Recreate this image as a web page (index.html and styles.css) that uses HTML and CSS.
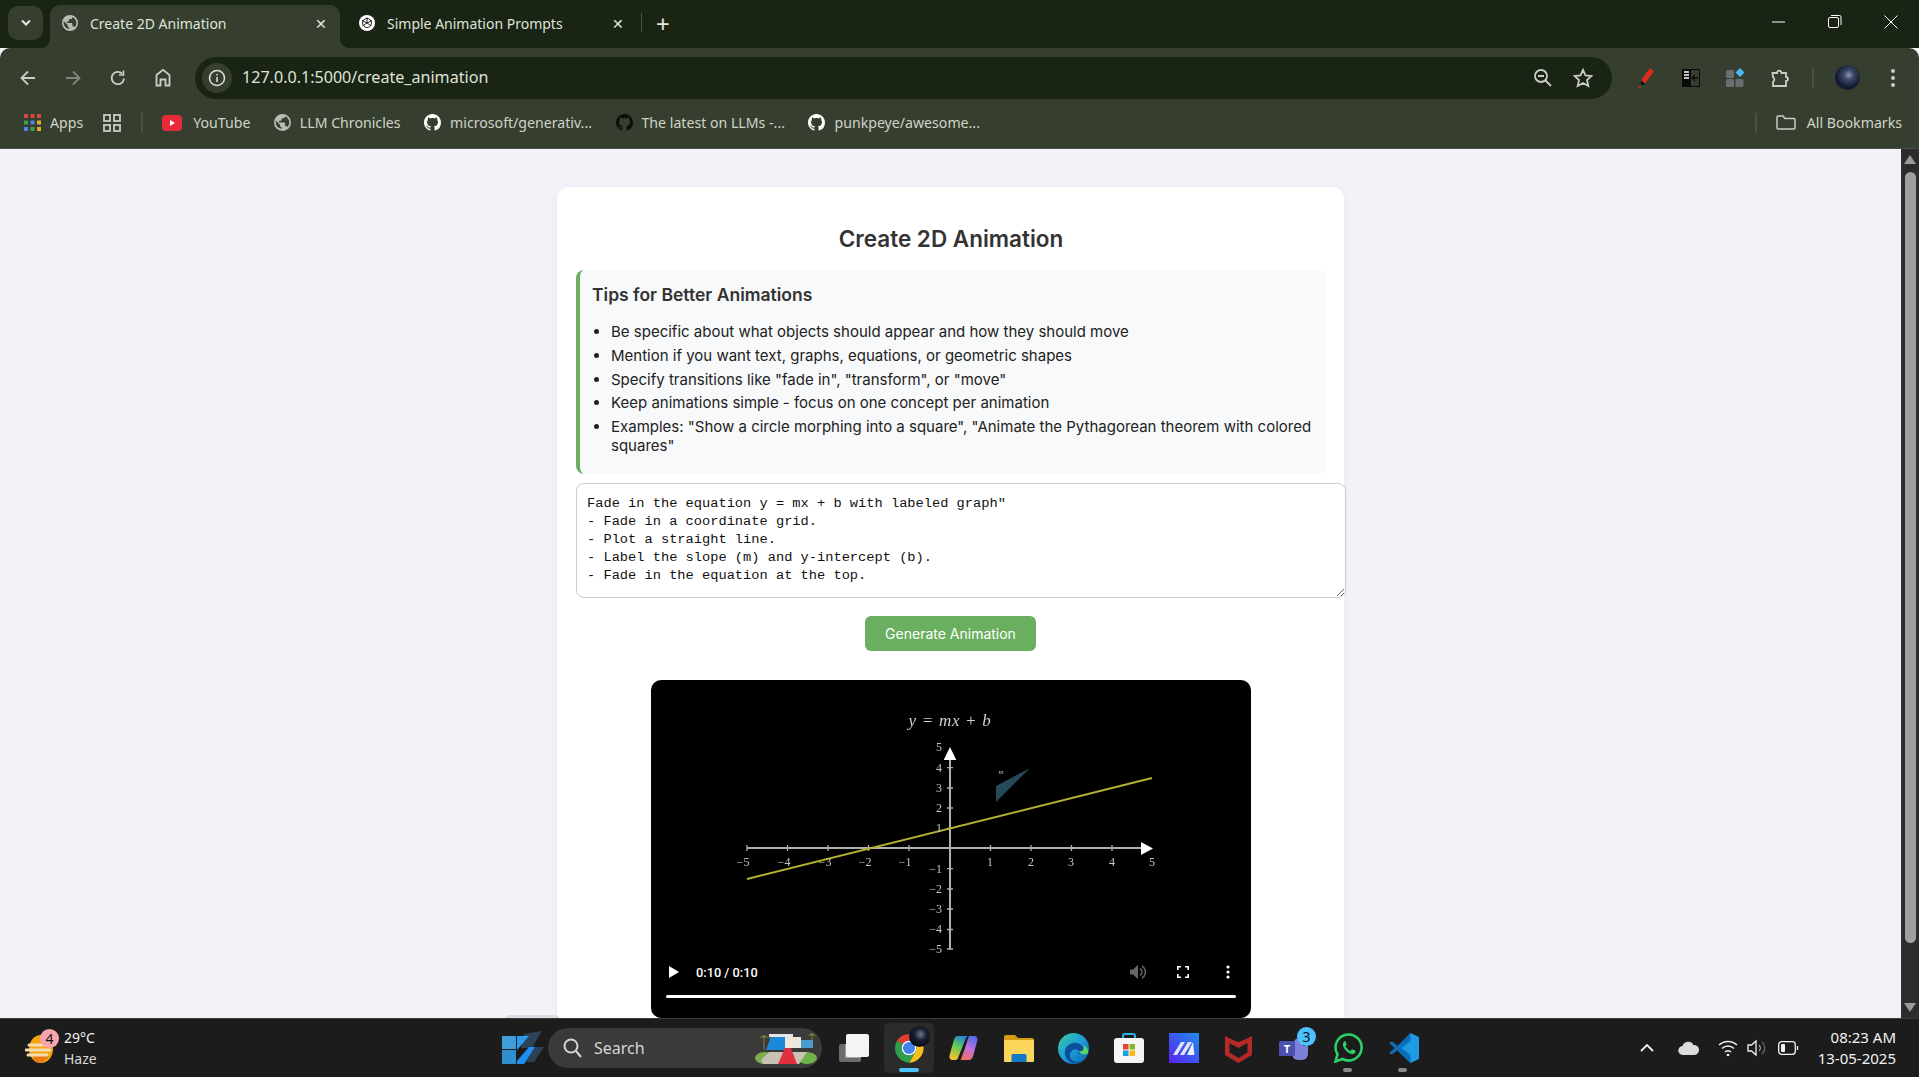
FILE: index.html
```html
<!DOCTYPE html>
<html lang="en">
<head>
    <meta charset="UTF-8">
    <meta name="viewport" content="width=device-width, initial-scale=1.0">
    <title>Create 2D Animation</title>
    <link rel="stylesheet" href="styles.css">
</head>
<body>
    <svg class="sprite" aria-hidden="true">
        <symbol id="github" viewBox="0 0 16 16">
            <path d="M8 0C3.58 0 0 3.58 0 8c0 3.54 2.29 6.53 5.47 7.59.4.07.55-.17.55-.38 0-.19-.01-.82-.01-1.49-2.01.37-2.53-.49-2.69-.94-.09-.23-.48-.94-.82-1.13-.28-.15-.68-.52-.01-.53.63-.01 1.08.58 1.23.82.72 1.21 1.87.87 2.33.66.07-.52.28-.87.51-1.07-1.78-.2-3.64-.89-3.64-3.95 0-.87.31-1.59.82-2.15-.08-.2-.36-1.02.08-2.12 0 0 .67-.21 2.2.82.64-.18 1.32-.27 2-.27.68 0 1.36.09 2 .27 1.53-1.04 2.2-.82 2.2-.82.44 1.1.16 1.92.08 2.12.51.56.82 1.27.82 2.15 0 3.07-1.87 3.75-3.65 3.95.29.25.54.73.54 1.48 0 1.07-.01 1.93-.01 2.2 0 .21.15.46.55.38A8.013 8.013 0 0016 8c0-4.42-3.58-8-8-8z"/>
        </symbol>
        <symbol id="globe" viewBox="0 0 16 16">
            <path d="M8 0a8 8 0 1 0 0 16A8 8 0 0 0 8 0zM1.600 8c0-.6.1-1.200.2-1.700L5.600 10v.8c0 .9.7 1.600 1.600 1.600v1.500A6.400 6.400 0 0 1 1.600 8zm11.100 4.300c-.2-.6-.8-1.100-1.500-1.100h-.8V8.800c0-.4-.4-.8-.8-.8H4.800V6.400h1.600c.4 0 .8-.4.8-.8V4h1.600c.9 0 1.600-.7 1.600-1.600v-.3a6.400 6.400 0 0 1 2.300 10.200z"/>
        </symbol>
    </svg>

    <div class="tabstrip">
        <button class="tab-search" aria-label="Search tabs">
            <svg width="12" height="8" viewBox="0 0 12 8"><path d="M2 1.500l4 4 4-4" fill="none" stroke="#e4e8dd" stroke-width="2"/></svg>
        </button>
        <div class="tab tab-active">
            <svg class="fav" fill="#b8bcb4"><use href="#globe"/></svg>
            <span class="tab-title">Create 2D Animation</span>
            <span class="tab-close">&#x2715;</span>
        </div>
        <div class="tab">
            <svg class="fav" viewBox="0 0 16 16">
                <circle cx="8" cy="8" r="8" fill="#fff"/>
                <g fill="none" stroke="#222" stroke-width="1">
                    <circle cx="8" cy="8" r="4.500"/>
                    <path d="M8 2.500v5.500l4.500 3M3.500 11l4.500-3M3 5.500l5 2.500 5-2.500"/>
                </g>
            </svg>
            <span class="tab-title">Simple Animation Prompts</span>
            <span class="tab-close">&#x2715;</span>
        </div>
        <span class="tab-sep"></span>
        <span class="tab-new">+</span>
        <div class="window-controls">
            <svg width="14" height="14" viewBox="0 0 14 14"><path d="M0 7h13" stroke="#fff" stroke-width="1"/></svg>
            <svg width="14" height="14" viewBox="0 0 14 14" fill="none" stroke="#fff"><rect x=".5" y="2.500" width="10" height="10" rx="1.500"/><path d="M3 .5h8.500a1.500 1.500 0 0 1 1.500 1.500v8"/></svg>
            <svg width="14" height="14" viewBox="0 0 14 14"><path d="M.5.5l13 13M13.500.5l-13 13" stroke="#fff"/></svg>
        </div>
    </div>

    <div class="toolbar">
        <span class="nav-btn"><svg width="18" height="18" viewBox="0 0 18 18" fill="none" stroke="#c9cec2" stroke-width="1.800"><path d="M16 9H3M9 2.500L2.500 9 9 15.500"/></svg></span>
        <span class="nav-btn"><svg width="18" height="18" viewBox="0 0 18 18" fill="none" stroke="#7f8679" stroke-width="1.800"><path d="M2 9h13M9 2.500L15.500 9 9 15.500"/></svg></span>
        <span class="nav-btn"><svg width="18" height="18" viewBox="0 0 18 18" fill="none" stroke="#c9cec2" stroke-width="1.800"><path d="M15 9.500A6.200 6.200 0 1 1 13.200 4.600"/><path d="M14.500 1.500v4.500H10" stroke-width="1.600"/></svg></span>
        <span class="nav-btn"><svg width="18" height="19" viewBox="0 0 18 19" fill="none" stroke="#c9cec2" stroke-width="1.800"><path d="M2.500 17.500V7L9 1.800 15.500 7v10.500h-4v-6h-5v6z"/></svg></span>
        <div class="omnibox">
            <span class="site-info"><svg width="18" height="18" viewBox="0 0 18 18" fill="none" stroke="#dfe3d8" stroke-width="1.500"><circle cx="9" cy="9" r="7.500"/><path d="M9 8v5M9 5v1.500"/></svg></span>
            <span class="url">127.0.0.1:5000/create_animation</span>
            <span class="omni-icon"><svg width="20" height="20" viewBox="0 0 20 20" fill="none" stroke="#c9cec2" stroke-width="1.800"><circle cx="8" cy="8" r="6"/><path d="M5 8h6M12.500 12.500L18 18"/></svg></span>
            <span class="omni-icon"><svg width="20" height="20" viewBox="0 0 20 20" fill="none" stroke="#c9cec2" stroke-width="1.800"><path d="M10 1.800l2.500 5.600 6 .6-4.500 4 1.300 6L10 15l-5.300 3 1.300-6-4.500-4 6-.6z"/></svg></span>
        </div>
        <div class="extensions">
            <span class="nav-btn"><svg width="18" height="22" viewBox="0 0 18 22"><path d="M13 1l4 3.500-9 12-4-3z" fill="#d92d20"/><path d="M4 13.500l4 3-1.500 1.500-3-.5z" fill="#111"/><path d="M3 18.500l-2 2.500 3-.5z" fill="#d92d20"/></svg></span>
            <span class="nav-btn"><svg width="18" height="18" viewBox="0 0 18 18"><rect width="18" height="18" fill="#0a0a0a"/><rect x="9" y="1" width="8" height="16" fill="#363f2f"/><path d="M2 3h5M2 6h5M2 9h5" stroke="#fff" stroke-width="1.300"/><path d="M16 9h-6M13 6l-3 3 3 3" stroke="#0a0a0a" stroke-width="1.300" fill="none"/></svg></span>
            <span class="nav-btn"><svg width="19" height="19" viewBox="0 0 19 19"><rect x="0" y="2" width="8" height="8" rx="1.500" fill="#6a6d72"/><rect x="0" y="11" width="8" height="8" rx="1.500" fill="#6a6d72"/><rect x="9.500" y="11" width="8" height="8" rx="1.500" fill="#6a6d72"/><path d="M14 0l4.500 4.500L14 9 9.500 4.500z" fill="#4bb8f2"/></svg></span>
            <span class="nav-btn"><svg width="20" height="20" viewBox="0 0 20 20" fill="none" stroke="#c9cec2" stroke-width="1.800"><path d="M1.500 5h4.500a2 2 0 1 1 4.500 0h4.500v4a2 2 0 1 1 0 4v5H2v-4a3 3 0 0 0 0-5z"/></svg></span>
        </div>
        <span class="bar-sep"></span>
        <span class="avatar"></span>
        <svg class="menu-dots" width="4" height="18" viewBox="0 0 4 18" fill="#c9cec2"><circle cx="2" cy="2" r="2"/><circle cx="2" cy="9" r="2"/><circle cx="2" cy="16" r="2"/></svg>
    </div>

    <div class="bookmarks">
        <span class="bm bm-apps">
            <svg width="17" height="17" viewBox="0 0 17 17">
                <g fill="#d9473c"><rect width="4" height="4"/><rect x="6.500" width="4" height="4"/><rect x="13" width="4" height="4"/></g>
                <g fill="#3aa14f"><rect y="6.500" width="4" height="4"/><rect x="6.500" y="6.500" width="4" height="4" fill="#4b86e8"/><rect x="13" y="6.500" width="4" height="4" fill="#e8a92c"/></g>
                <g fill="#e8a92c"><rect y="13" width="4" height="4" fill="#4b86e8"/><rect x="6.500" y="13" width="4" height="4" fill="#3aa14f"/><rect x="13" y="13" width="4" height="4"/></g>
            </svg>
            Apps
        </span>
        <svg class="bm-groups" width="18" height="18" viewBox="0 0 18 18" fill="none" stroke="#c9cec2" stroke-width="1.800"><rect x="1" y="1" width="6" height="6"/><rect x="11" y="1" width="6" height="6"/><rect x="1" y="11" width="6" height="6"/><rect x="11" y="11" width="6" height="6"/></svg>
        <span class="bar-sep bm-sep"></span>
        <span class="bm bm-yt">
            <svg width="20" height="16" viewBox="0 0 20 16"><rect width="20" height="16" rx="4" fill="#e8293a"/><path d="M8 5l5 3-5 3z" fill="#fff"/></svg>
            YouTube
        </span>
        <span class="bm"><svg class="bm-icon" fill="#b8bcb4"><use href="#globe"/></svg>LLM Chronicles</span>
        <span class="bm"><svg class="bm-icon" fill="#fff"><use href="#github"/></svg>microsoft/generativ...</span>
        <span class="bm"><svg class="bm-icon" fill="#0d0f0c"><use href="#github"/></svg>The latest on LLMs -...</span>
        <span class="bm"><svg class="bm-icon" fill="#fff"><use href="#github"/></svg>punkpeye/awesome...</span>
        <span class="bm-all">
            <span class="bar-sep"></span>
            <svg width="20" height="15" viewBox="0 0 20 15" fill="none" stroke="#c9cec2" stroke-width="1.500"><path d="M1 13V2a1 1 0 0 1 1-1h5l2 2.500h9a1 1 0 0 1 1 1V13a1 1 0 0 1-1 1H2a1 1 0 0 1-1-1z"/></svg>
            All Bookmarks
        </span>
    </div>

    <div class="viewport">
        <main class="page">
            <section class="card">
                <h1>Create 2D Animation</h1>
                <div class="tips">
                    <h3>Tips for Better Animations</h3>
                    <ul>
                        <li>Be specific about what objects should appear and how they should move</li>
                        <li>Mention if you want text, graphs, equations, or geometric shapes</li>
                        <li>Specify transitions like "fade in", "transform", or "move"</li>
                        <li>Keep animations simple - focus on one concept per animation</li>
                        <li>Examples: "Show a circle morphing into a square", "Animate the Pythagorean theorem with colored squares"</li>
                    </ul>
                </div>
                <form class="prompt-form">
                    <textarea class="prompt">Fade in the equation y = mx + b with labeled graph"
- Fade in a coordinate grid.
- Plot a straight line.
- Label the slope (m) and y-intercept (b).
- Fade in the equation at the top.</textarea>
                    <button type="button" class="generate">Generate Animation</button>
                </form>
                <div class="video">
                    <svg class="plot" width="600" height="338" viewBox="0 0 600 338">
                        <g fill="none" stroke="#b0b0b0">
                            <path stroke-width="2" d="M96 168H490M299 269V80"/>
                            <path stroke-width="1.300" d="M96 165v6M136.500 165v6M177 165v6M217.500 165v6M258 165v6M339.500 165v6M380 165v6M420.500 165v6M461 165v6"/>
                            <path stroke-width="1.300" d="M296 87.700h6M296 108h6M296 128h6M296 148.300h6M296 188.700h6M296 209h6M296 229h6M296 249.500h6M296 269h6"/>
                        </g>
                        <path d="M490 162l12 6.500-12 6.500zM292.700 80l6.300-13 6.300 13z" fill="#fff"/>
                        <path d="M345 106l34-18-34 34z" fill="#234a55"/>
                        <path d="M96 199L501 98" stroke="#b3b32c" stroke-width="2"/>
                        <g class="plot-labels" text-anchor="middle">
                            <text class="plot-title" x="299" y="46">y = mx + b</text>
                            <text class="plot-m" x="350" y="94">m</text>
                            <text x="92" y="186">−5</text><text x="133" y="186">−4</text><text x="174" y="186">−3</text><text x="214" y="186">−2</text><text x="254" y="186">−1</text>
                            <text x="339" y="186">1</text><text x="380" y="186">2</text><text x="420" y="186">3</text><text x="461" y="186">4</text><text x="501" y="186">5</text>
                        </g>
                        <g class="plot-labels" text-anchor="end">
                            <text x="291" y="71">5</text><text x="291" y="92">4</text><text x="291" y="112">3</text><text x="291" y="132">2</text><text x="291" y="152">1</text>
                            <text x="291" y="193">−1</text><text x="291" y="213">−2</text><text x="291" y="233">−3</text><text x="291" y="253">−4</text><text x="291" y="273">−5</text>
                        </g>
                    </svg>
                    <div class="video-controls">
                        <div class="video-row">
                            <svg width="11" height="12" viewBox="0 0 11 12"><path d="M0 0l10 6-10 6z" fill="#fff"/></svg>
                            <span class="video-time">0:10 / 0:10</span>
                            <svg class="video-vol" width="16" height="14" viewBox="0 0 16 14"><path d="M0 4.500h3L8 0v14L3 9.500H0z" fill="#666"/><path d="M10 3.500a4 4 0 0 1 0 7M12 1a7 7 0 0 1 0 12" fill="none" stroke="#666" stroke-width="1.500"/></svg>
                            <svg class="video-full" width="12" height="12" viewBox="0 0 12 12" fill="none" stroke="#fff" stroke-width="1.600"><path d="M.8 4V.8H4M8 .8h3.200V4M11.200 8v3.200H8M4 11.200H.8V8"/></svg>
                            <svg class="video-more" width="4" height="14" viewBox="0 0 4 14" fill="#fff"><circle cx="2" cy="2" r="1.600"/><circle cx="2" cy="7" r="1.600"/><circle cx="2" cy="12" r="1.600"/></svg>
                        </div>
                        <div class="video-progress"></div>
                    </div>
                </div>
            </section>
            <span class="hover-peek"></span>
        </main>
        <aside class="scrollbar">
            <svg width="12" height="9" viewBox="0 0 12 9"><path d="M6 0l6 9H0z" fill="#9a9a9a"/></svg>
            <span class="scroll-thumb"></span>
            <svg width="12" height="9" viewBox="0 0 12 9"><path d="M0 0h12L6 9z" fill="#9a9a9a"/></svg>
        </aside>
    </div>

    <footer class="taskbar">
        <div class="weather">
            <span class="weather-icon">
                <svg width="29" height="29" viewBox="0 0 29 29">
                    <ellipse cx="16" cy="15" rx="12" ry="14" fill="#f5a412"/>
                    <path d="M10 28a12 12 0 0 0 14-6H8z" fill="#e87a10"/>
                    <path d="M4 11h20M1 16h24M3 21h19" stroke="#f1dfb0" stroke-width="3" stroke-linecap="round"/>
                </svg>
                <span class="badge badge-pink">4</span>
            </span>
            <div class="weather-text"><span>29°C</span><span class="weather-sub">Haze</span></div>
        </div>
        <svg class="start" width="43" height="34" viewBox="0 0 43 34">
            <path d="M22 3L40 0 30 17H19z" fill="#36506a" opacity=".75"/>
            <path d="M28 16h14L32 31H18z" fill="#35506e" opacity=".7"/>
            <rect x="0" y="5" width="14" height="13" fill="#3f9fd8"/>
            <rect x="0" y="19" width="14" height="14" fill="#2f8fd0"/>
            <path d="M15 5h12l-12 14z" fill="#2d9cf0"/>
            <path d="M15 33v-3l12-14h6L22 33z" fill="#1e90f5"/>
        </svg>
        <div class="search">
            <svg width="19" height="20" viewBox="0 0 19 20" fill="none" stroke="#d5d5d5" stroke-width="2"><circle cx="8" cy="8" r="6.500"/><path d="M13 13l5 6"/></svg>
            <span class="search-label">Search</span>
            <svg class="search-art" width="62" height="32" viewBox="0 0 62 32">
                <ellipse cx="10" cy="26" rx="10" ry="6" fill="#7cae4e"/>
                <ellipse cx="52" cy="26" rx="10" ry="6" fill="#6fb14a"/>
                <path d="M6 28L14 20h38l-8 12H8z" fill="#c9c2b4"/>
                <rect x="8" y="4" width="2" height="14" fill="#6b5a3a"/>
                <path d="M4 6l5-3 6 3-6-1z" fill="#6f8f3a"/>
                <rect x="56" y="2" width="2" height="10" fill="#6b5a3a"/>
                <path d="M52 4l5-3 5 3-5-1z" fill="#6f8f3a"/>
                <path d="M11 18l5-14h14v14z" fill="#1e88d8"/>
                <rect x="30" y="5" width="16" height="11" fill="#efe6dc"/>
                <rect x="46" y="8" width="12" height="8" fill="#4a9ad0"/>
                <rect x="14" y="2" width="24" height="3" fill="#e6e6e6"/>
                <path d="M30 16h6l6 16H23z" fill="#e0303f"/>
            </svg>
        </div>
        <div class="dock">
            <span class="dock-item">
                <svg width="30" height="28" viewBox="0 0 30 28"><rect x="0" y="10" width="22" height="18" rx="2" fill="#6c6c6c"/><rect x="6" y="10" width="16" height="14" fill="#a2a2a2"/><rect x="7" y="0" width="23" height="23" rx="2" fill="#f4f4f4"/></svg>
            </span>
            <span class="dock-item dock-active">
                <svg width="32" height="32" viewBox="0 0 48 48">
                    <path d="M5.950 13A22 22 0 0 1 43.050 13H24a11 11 0 0 0-9.530 5.500z" fill="#e0402f"/>
                    <path d="M43.050 13A22 22 0 0 1 24 46l9.530-16.500A11 11 0 0 0 24 13z" fill="#f6c01c"/>
                    <path d="M5.950 13A22 22 0 0 0 24 46l9.530-16.500A11 11 0 0 1 14.470 18.500z" fill="#2f9f4c"/>
                    <circle cx="24" cy="24" r="11" fill="#fff"/><circle cx="24" cy="24" r="9" fill="#3f82ec"/>
                </svg>
                <span class="dock-avatar"></span>
            </span>
            <span class="dock-item">
                <svg width="29" height="26" viewBox="0 0 30 26">
                    <defs>
                        <linearGradient id="cop1" x1="0.700" y1="0" x2="0.300" y2="1"><stop offset="0" stop-color="#1f7fe0"/><stop offset=".45" stop-color="#5fc95a"/><stop offset="1" stop-color="#f6c22c"/></linearGradient>
                        <linearGradient id="cop2" x1="0.700" y1="0" x2="0.300" y2="1"><stop offset="0" stop-color="#4a6fe8"/><stop offset=".5" stop-color="#c06fe0"/><stop offset="1" stop-color="#f2705a"/></linearGradient>
                    </defs>
                    <path d="M21 .5h5c3 0 4 2.500 3.300 5L25 21c-.7 2.500-2 4.500-4.500 4.500H12l4-11 4-12c.2-.7.5-2 1-2z" fill="url(#cop2)"/>
                    <path d="M9 .5h11c-1 0-2 1-2.500 2.500L13 14l-4 10c-.6 1-2 1.500-3 1.500H4C1 25.500 0 23 .7 20L5 5c.7-2.500 2-4.500 4-4.500z" fill="url(#cop1)"/>
                </svg>
            </span>
            <span class="dock-item">
                <svg width="30" height="27" viewBox="0 0 30 27"><path d="M0 2a2 2 0 0 1 2-2h9l3 3h14a2 2 0 0 1 2 2v4H0z" fill="#d49c14"/><rect y="5" width="30" height="22" rx="1" fill="#fbd65a"/><path d="M9 19h12a1.500 1.500 0 0 1 1.500 1.500V27h-15v-6.500A1.500 1.500 0 0 1 9 19z" fill="#1478c8"/></svg>
            </span>
            <span class="dock-item">
                <svg width="31" height="31" viewBox="0 0 31 31">
                    <defs><linearGradient id="edge1" x1="0" y1="0" x2="1" y2="1"><stop offset="0" stop-color="#3fc7a0"/><stop offset=".5" stop-color="#1d9ed8"/><stop offset="1" stop-color="#0c5fb0"/></linearGradient></defs>
                    <circle cx="15.500" cy="15.500" r="15.500" fill="url(#edge1)"/>
                    <path d="M14 30c-5-2-8-7-7-12 1-6 7-9 12-8 5 1 8 5 6 9-1 2-4 2-5 1 2-3-2-5-5-3-4 2-4 7-1 10 2 2 5 3 9 1-2 2-6 3-9 2z" fill="#0c4f9c"/>
                    <path d="M30 20c-1 1-4 2-6 1-2-.5-3-2-3-3 1 .5 3 .5 4-1 1-2 1-4 0-5 3 1 6 4 5 8z" fill="#59d36e"/>
                </svg>
            </span>
            <span class="dock-item">
                <svg width="30" height="30" viewBox="0 0 30 30"><path d="M9 6V3a2 2 0 0 1 2-2h8a2 2 0 0 1 2 2v3" fill="none" stroke="#2bb4e8" stroke-width="2"/><rect y="5" width="30" height="25" rx="3" fill="#f5f5f5"/><rect x="9" y="11" width="5.500" height="5.500" fill="#e7442a"/><rect x="15.500" y="11" width="5.500" height="5.500" fill="#7eb82a"/><rect x="9" y="17.500" width="5.500" height="5.500" fill="#16a0e8"/><rect x="15.500" y="17.500" width="5.500" height="5.500" fill="#f8b71a"/></svg>
            </span>
            <span class="dock-item">
                <svg width="30" height="30" viewBox="0 0 30 30">
                    <defs><linearGradient id="tool1" x1="1" y1="0" x2="0" y2="1"><stop offset="0" stop-color="#1e8cf0"/><stop offset="1" stop-color="#5a22f0"/></linearGradient></defs>
                    <rect width="30" height="30" fill="url(#tool1)"/>
                    <path d="M4 22L12 9h4L8 22zM11 22l8-13h4l-8 13z" fill="#dfe4fa"/><path d="M18 22l6-13 1.500 13z" fill="#fff" opacity=".9"/>
                </svg>
            </span>
            <span class="dock-item">
                <svg width="27" height="30" viewBox="0 0 27 30"><path d="M0 3l8 4 5.500 2L19 7l8-4v19L13.500 30 0 22zM4.500 10v9.500l9 5.500 9-5.500V10l-9 5z" fill="#b52a28"/></svg>
            </span>
            <span class="dock-item">
                <svg width="30" height="28" viewBox="0 0 30 28"><circle cx="20" cy="9" r="5" fill="#7b83d8"/><path d="M13 12h16v8a6 6 0 0 1-6 6h-4a6 6 0 0 1-6-6z" fill="#7b83d8"/><rect x="0" y="7" width="16" height="15" rx="1.500" fill="#4a51b0"/><text class="teams-t" x="8" y="19" text-anchor="middle">T</text></svg>
                <span class="badge badge-blue">3</span>
            </span>
            <span class="dock-item">
                <svg width="30" height="30" viewBox="0 0 30 30"><path d="M1.500 28.500l2-7.200A13 13 0 1 1 8.500 26z" fill="none" stroke="#2bcf66" stroke-width="2.600"/><path d="M10.500 8.500c-1 .5-2 2-1.500 4 .8 3.500 4.500 7.500 8.500 8.500 2 .3 3.500-.7 4-2 .2-.5.200-1 0-1.200l-3-1.500c-.4-.2-.7 0-1 .4l-1 1.200c-2-.7-4-2.700-5-4.700l1-1.200c.3-.3.300-.6.100-1l-1.200-2.700c-.2-.4-.5-.5-.9-.4z" fill="#2bcf66"/></svg>
            </span>
            <span class="dock-item">
                <svg width="30" height="30" viewBox="0 0 30 30"><path d="M21.500 0L30 4v22l-8.500 4L8 17l13.500-17z" fill="#1f9be6"/><path d="M21.500 0L8.500 12.800 3 8.500 0 10l5.800 5L0 20l3 1.500 5.500-4.300L21.500 30V22L12.500 15 21.500 8z" fill="#0a6eb8"/></svg>
            </span>
        </div>
        <div class="tray">
            <svg class="tray-chevron" width="14" height="8" viewBox="0 0 14 8"><path d="M1 7l6-6 6 6" fill="none" stroke="#f2f2f2" stroke-width="1.800"/></svg>
            <svg class="tray-cloud" width="21" height="14" viewBox="0 0 21 14"><path d="M5 14a4.500 4.500 0 0 1-.5-9A6 6 0 0 1 15.500 4a5 5 0 0 1 1 10z" fill="#dcdcdc"/></svg>
            <svg class="tray-wifi" width="20" height="18" viewBox="0 0 20 18" fill="none" stroke="#f2f2f2" stroke-width="1.500"><path d="M1 6a13 13 0 0 1 18 0M4 9.500a8.500 8.500 0 0 1 12 0M7 13a4 4 0 0 1 6 0"/><circle cx="10" cy="16" r="1.300" fill="#f2f2f2" stroke="none"/></svg>
            <svg class="tray-vol" width="20" height="20" viewBox="0 0 20 20" fill="none" stroke="#f2f2f2" stroke-width="1.300"><path d="M1 7h3.500L9 3v14l-4.500-4H1z"/><path d="M12 7a4 4 0 0 1 0 6" stroke="#999"/><path d="M15 4a8 8 0 0 1 0 12" stroke="#666"/></svg>
            <svg class="tray-batt" width="21" height="14" viewBox="0 0 21 14" fill="none" stroke="#f2f2f2" stroke-width="1.300"><rect x=".7" y=".7" width="16.600" height="12.600" rx="3"/><rect x="3" y="3" width="4" height="8" rx="1" fill="#f2f2f2" stroke="none"/><path d="M19.500 5v4"/></svg>
            <div class="clock"><span>08:23 AM</span><span>13-05-2025</span></div>
        </div>
    </footer>
</body>
</html>
```

FILE: styles.css
```css
* {
    margin: 0;
    padding: 0;
    box-sizing: border-box;
}

html,
body {
    height: 100%;
    overflow: hidden;
}

body {
    display: flex;
    flex-direction: column;
    font-family: Inter, sans-serif;
    background-color: #f2f2f8;
}

.sprite {
    display: none;
}

/* browser chrome */
.tabstrip {
    height: 48px;
    flex: none;
    display: flex;
    align-items: flex-end;
    padding-left: 8px;
    background-color: #1a2414;
    color: #dfe3d8;
    font: 14px "Noto Sans", sans-serif;
}

.tab-search {
    width: 35px;
    height: 34px;
    margin-bottom: 8px;
    margin-right: 7px;
    display: flex;
    align-items: center;
    justify-content: center;
    border: none;
    border-radius: 10px;
    background-color: #363f2f;
}

.tab {
    width: 290px;
    height: 43px;
    display: flex;
    align-items: center;
    padding: 0 13px 7px 12px;
    margin-right: 2px;
    border-radius: 10px 10px 0 0;
}

.tab-active {
    position: relative;
    margin-right: 7px;
    background-color: #363f2f;
}

.tab-active::before,
.tab-active::after {
    content: "";
    position: absolute;
    bottom: 0;
    width: 10px;
    height: 10px;
    background-color: #363f2f;
}

.tab-active::before {
    left: -10px;
    -webkit-mask: radial-gradient(circle at 0 0, transparent 10px, #000 10.500px);
}

.tab-active::after {
    right: -10px;
    -webkit-mask: radial-gradient(circle at 100% 0, transparent 10px, #000 10.500px);
}

.fav {
    width: 16px;
    height: 16px;
    flex: none;
}

.tab-title {
    margin-left: 12px;
    flex: 1;
}

.tab-close {
    font-size: 14px;
    color: #e4e8dd;
}

.tab-sep {
    width: 1px;
    height: 19px;
    margin-bottom: 16px;
    background-color: #4a5342;
    margin-left: 2px;
}

.tab-new {
    margin-left: 14px;
    margin-bottom: 9px;
    font-size: 24px;
    line-height: 30px;
    color: #e4e8dd;
}

.window-controls {
    margin-left: auto;
    align-self: flex-start;
    display: flex;
    gap: 42px;
    padding: 15px 21px 0 0;
}

.toolbar {
    height: 51px;
    flex: none;
    display: flex;
    align-items: center;
    padding: 8px 0 0 5px;
    background-color: #363f2f;
    border-radius: 10px 10px 0 0;
}

.nav-btn {
    width: 45px;
    display: flex;
    justify-content: center;
    align-items: center;
}

.omnibox {
    width: 1417px;
    height: 42px;
    margin-left: 10px;
    display: flex;
    align-items: center;
    padding: 0 9px 0 7px;
    border-radius: 21px;
    background-color: #1a2414;
    font: 16.100px "Noto Sans", sans-serif;
    color: #dfe3d8;
}

.site-info {
    width: 30px;
    height: 30px;
    display: flex;
    align-items: center;
    justify-content: center;
    border-radius: 50%;
    background-color: #363f2f;
}

.url {
    margin-left: 10px;
    margin-bottom: 1px;
    flex: 1;
}

.omni-icon {
    width: 40px;
    display: flex;
    justify-content: center;
}

.extensions {
    display: flex;
    margin-left: 11px;
}

.bar-sep {
    width: 2px;
    height: 20px;
    background-color: #4a5342;
}

.toolbar .bar-sep {
    margin-left: 9px;
}

.avatar {
    width: 25px;
    height: 25px;
    margin-left: 21px;
    border-radius: 50%;
    background: radial-gradient(circle at 55% 40%, #8d98ad 0, #3a4766 25%, #141b30 60%);
}

.menu-dots {
    margin-left: 31px;
}

.bookmarks {
    height: 50px;
    flex: none;
    display: flex;
    align-items: center;
    padding: 0 17px 2px 24px;
    background-color: #363f2f;
    color: #cfd4c8;
    font: 14.150px "Noto Sans", sans-serif;
    border-bottom: 1px solid #4d4d4d;
}

.bm {
    display: flex;
    align-items: center;
    gap: 9px;
    margin-right: 23.500px;
    white-space: nowrap;
}

.bm-icon {
    width: 17px;
    height: 17px;
    flex: none;
}

.bm-apps {
    gap: 9px;
    margin-right: 20px;
}

.bm-sep {
    margin: 0 19px 0 20px;
}

.bm-yt {
    gap: 11px;
}

.bm-all {
    margin-left: auto;
    display: flex;
    align-items: center;
    gap: 11px;
}

.bm-all .bar-sep {
    margin-right: 8px;
}

/* the page itself */
.viewport {
    flex: 1;
    min-height: 0;
    display: flex;
}

.page {
    flex: 1;
    position: relative;
    overflow: hidden;
    padding-top: 38px;
}

.card {
    width: 787px;
    margin: 0 auto;
    padding: 19px 18px 19px 19px;
    background-color: white;
    border-radius: 12px;
    box-shadow: 0 2px 8px rgba(0, 0, 0, 0.05);
}

h1 {
    margin: 18px 0 17px;
    font-size: 22.500px;
    line-height: 29px;
    font-weight: 600;
    text-align: center;
    color: #333;
}

.tips {
    padding: 14px 14px 14px 12px;
    background-color: #f8f9fa;
    border-left: 4px solid #6aaf5f;
    border-radius: 8px;
    color: #222;
}

.tips h3 {
    margin-bottom: 16px;
    font-size: 17.500px;
    line-height: 22px;
    font-weight: 600;
    color: #333;
}

.tips ul {
    padding-left: 19px;
}

.tips li {
    margin-bottom: 4.750px;
    font-size: 15px;
    line-height: 19px;
}

.prompt-form {
    margin-top: 9px;
    display: flex;
    flex-direction: column;
    align-items: center;
}

.prompt {
    box-sizing: content-box;
    width: 748px;
    height: 92px;
    padding: 11px 10px 10px;
    align-self: flex-start;
    border: 1px solid #ccc;
    border-radius: 8px;
    background-color: white;
    font: 13.700px/18px "Liberation Mono", monospace;
    color: #111;
    outline: none;
}

.generate {
    width: 171px;
    height: 35px;
    margin: 18px 1px 0 0;
    border: none;
    border-radius: 6px;
    background-color: #6aaf5f;
    color: white;
    font: 14px Inter, sans-serif;
}

.video {
    position: relative;
    width: 600px;
    height: 338px;
    margin: 29px auto 0;
    border-radius: 10px;
    overflow: hidden;
    background-color: black;
}

.plot {
    display: block;
    filter: blur(0.3px);
}

.plot-labels text {
    font: 12px "Liberation Serif", serif;
    fill: #c4c4c4;
}

.plot-labels .plot-title {
    font: italic 17px "Liberation Serif", serif;
    letter-spacing: 0.7px;
    fill: #d0d0d0;
}

.plot-labels .plot-m {
    font: italic 7px "Liberation Serif", serif;
}

.video-controls {
    position: absolute;
    left: 15px;
    right: 15px;
    bottom: 20px;
}

.video-row {
    display: flex;
    align-items: center;
    padding: 0 6px 0 3px;
    margin-bottom: 15px;
}

.video-time {
    margin-left: 16px;
    font: 500 12.800px Roboto, sans-serif;
    color: white;
}

.video-vol {
    margin-left: auto;
}

.video-full {
    margin-left: 31px;
}

.video-more {
    margin-left: 37px;
}

.video-progress {
    height: 3px;
    background-color: white;
    border-radius: 2px;
}

.hover-peek {
    position: absolute;
    left: 506px;
    bottom: 0;
    width: 53px;
    height: 3px;
    border-radius: 6px 6px 0 0;
    background-color: #dcdce4;
}

.scrollbar {
    width: 18px;
    flex: none;
    display: flex;
    flex-direction: column;
    align-items: center;
    padding: 6px 0;
    background-color: #2c2c2c;
}

.scroll-thumb {
    width: 11px;
    height: 771px;
    margin: 8px 0 60px;
    border-radius: 6px;
    background-color: #9f9f9f;
}

/* windows taskbar */
.taskbar {
    height: 59px;
    flex: none;
    display: flex;
    align-items: center;
    padding: 0 23px 0 25px;
    background-color: #1c1c1c;
    border-top: 1px solid #3a3a3a;
    color: #f2f2f2;
    font: 14px "Noto Sans", sans-serif;
}

.weather {
    width: 477px;
    display: flex;
    align-items: center;
    gap: 10px;
}

.weather-icon {
    position: relative;
    display: flex;
}

.weather-text {
    display: flex;
    flex-direction: column;
    line-height: 21px;
}

.weather-sub {
    color: #d8d8d8;
}

.badge {
    position: absolute;
    display: flex;
    align-items: center;
    justify-content: center;
    width: 19px;
    height: 19px;
    border-radius: 50%;
    font-size: 14px;
    color: #111;
}

.badge-pink {
    top: -5px;
    right: -5px;
    background-color: #f7a5ad;
}

.badge-blue {
    top: 4px;
    right: 5px;
    background-color: #4cc2ff;
}

.start {
    flex: none;
}

.search {
    width: 274px;
    height: 40px;
    margin-left: 3px;
    flex: none;
    display: flex;
    align-items: center;
    padding: 0 5px 0 15px;
    border-radius: 20px;
    background-color: #3a3a3a;
    font-size: 16px;
    color: #d5d5d5;
}

.search-label {
    margin-left: 12px;
}

.search-art {
    margin-left: auto;
}

.dock {
    margin-left: 4px;
    display: flex;
}

.dock-item {
    position: relative;
    width: 55px;
    height: 50px;
    display: flex;
    align-items: center;
    justify-content: center;
}

.dock-active::before {
    content: "";
    position: absolute;
    left: 2.500px;
    right: 2.500px;
    top: 0;
    bottom: 0;
    border-radius: 5px;
    background-color: #2b2b2b;
}

.dock-active svg {
    position: relative;
}

.dock-active::after {
    content: "";
    position: absolute;
    left: 18px;
    width: 20px;
    bottom: 1px;
    height: 4px;
    border-radius: 2px;
    background-color: #4cc2ff;
}

.dock-avatar {
    position: absolute;
    top: 3px;
    right: 6px;
    width: 21px;
    height: 21px;
    border-radius: 50%;
    background: radial-gradient(circle at 55% 40%, #6d7890 0, #1a2030 35%, #0a0d18 70%);
}

.dock-item:nth-last-child(-n+2)::after {
    content: "";
    position: absolute;
    bottom: 1px;
    left: 22px;
    width: 9px;
    height: 4px;
    border-radius: 2px;
    background-color: #8a8a8a;
}

.teams-t {
    font: 700 11px "Noto Sans", sans-serif;
    fill: white;
}

.tray {
    margin-left: auto;
    display: flex;
    align-items: center;
}

.tray-cloud {
    margin-left: 24px;
}

.tray-wifi {
    margin-left: 19px;
}

.tray-vol {
    margin-left: 9px;
}

.tray-batt {
    margin-left: 11px;
}

.clock {
    width: 97px;
    display: flex;
    flex-direction: column;
    align-items: flex-end;
    font-size: 15px;
    line-height: 21px;
}
```
